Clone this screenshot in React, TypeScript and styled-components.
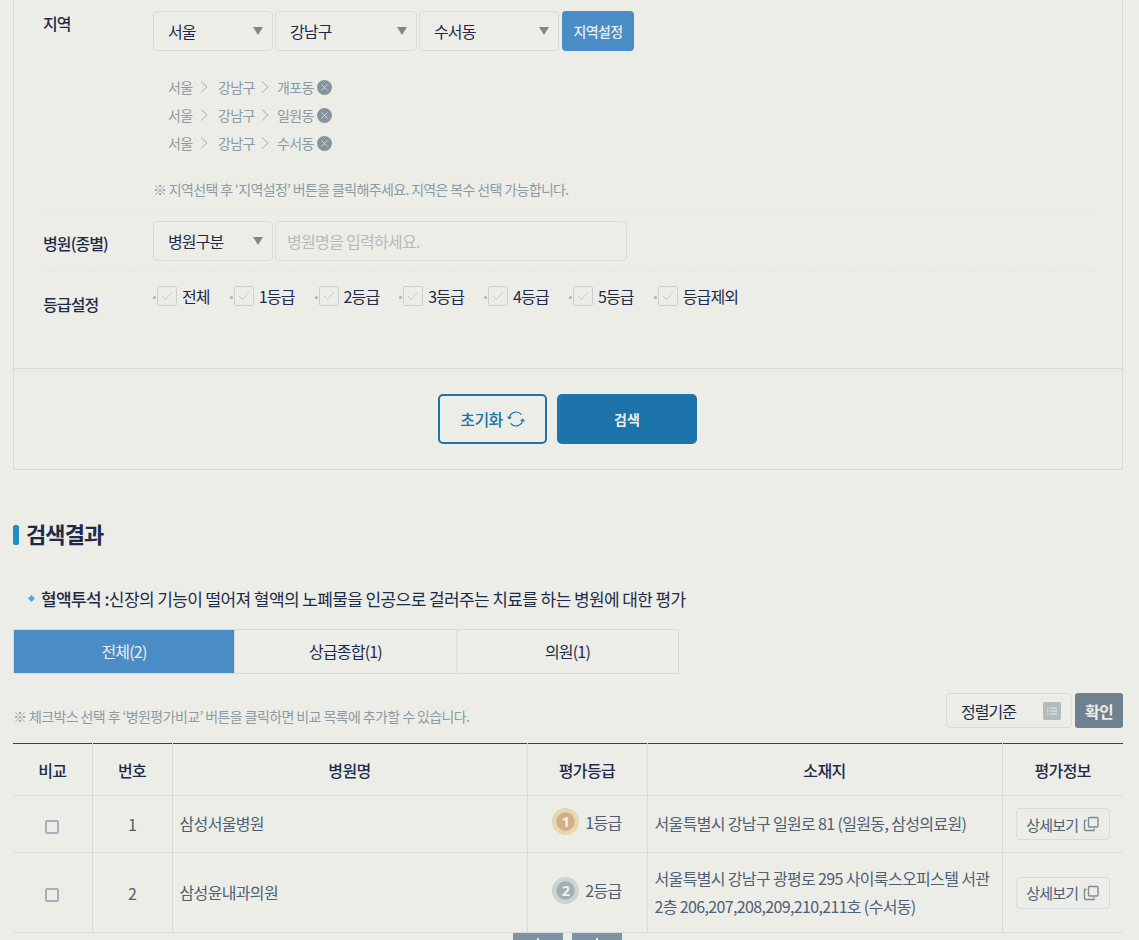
import { createGlobalStyle } from 'styled-components';
import styled from 'styled-components';
import { X } from 'lucide-react';

const colors = {
  bg: '#ecede7',
  line: '#d3dcdc',
  navy: '#1e2a4a',
  text: '#4f6075',
  gray: '#8d9aa3',
  blue: '#4a8dc6',
  deep: '#1c74aa',
  slate: '#6f808e',
};

const GlobalStyle = createGlobalStyle`
  html, body {
    margin: 0;
    height: 940px;
    overflow: hidden;
    background: ${colors.bg};
  }
  * {
    box-sizing: border-box;
  }
  body {
    font-family: 'Noto Sans CJK KR', 'Noto Sans', sans-serif;
    letter-spacing: -0.6px;
    color: ${colors.navy};
  }
`;

const regions = ['개포동', '일원동', '수서동'];
const grades = ['전체', '1등급', '2등급', '3등급', '4등급', '5등급', '등급제외'];

function Medal({ rank }: { rank: number }) {
  const outer = rank === 1 ? '#e6d5ab' : '#c8d2d1';
  const rays = rank === 1 ? '#e9dab4' : '#ced7d5';
  const inner = rank === 1 ? '#d2af85' : '#a3afb3';
  return (
    <svg width="27" height="27" viewBox="0 0 28 28">
      <circle cx="14" cy="14" r="14" fill={outer} />
      <circle cx="14" cy="14" r="11.5" fill="none" stroke={rays} strokeWidth="3" strokeDasharray="3 2" />
      <circle cx="14" cy="14" r="9.5" fill={inner} />
      <text
        x="14"
        y="19.5"
        textAnchor="middle"
        fontSize="15"
        fontWeight="700"
        fontFamily="'Noto Sans', sans-serif"
        fill="#f2f1ea"
      >
        {rank}
      </text>
    </svg>
  );
}

function Chevron() {
  return (
    <svg width="8" height="12" viewBox="0 0 8 12" fill="none" stroke="#a3aeb5" strokeWidth="1">
      <path d="M1 0.5L7 6L1 11.5" />
    </svg>
  );
}

function RefreshIcon() {
  return (
    <svg width="18" height="18" viewBox="0 0 20 20" fill="none" stroke={colors.deep} strokeWidth="1.3">
      <path d="M2.5 9A7.6 7.6 0 0 1 16 5.2" />
      <path d="M17.5 11A7.6 7.6 0 0 1 4 14.8" />
      <path d="M0.6 7.4L2.5 9.6L4.8 7.8" />
      <path d="M19.4 12.6L17.5 10.4L15.2 12.2" />
    </svg>
  );
}

function CopyIcon() {
  return (
    <svg width="16" height="16" viewBox="0 0 16 16" fill="none" stroke="#7d8b98" strokeWidth="1.4">
      <rect x="5.5" y="1.5" width="9.5" height="9.5" rx="1" />
      <path d="M3.5 4.5H1.5V13.5A1 1 0 0 0 2.5 14.5H11V12.5" />
    </svg>
  );
}

function ListIcon() {
  return (
    <svg width="10" height="8" viewBox="0 0 10 8" stroke="#ecede7" strokeWidth="1">
      <path d="M0 1H1.5M3 1H10M0 4H1.5M3 4H10M0 7H1.5M3 7H10" />
    </svg>
  );
}

export default function App() {
  return (
    <Page>
      <GlobalStyle />
      <Panel>
        <FormArea>
          <RegionRow>
            <RowLabel>지역</RowLabel>
            <RowBody>
              <Controls>
                <SelectBox $width={120}>서울</SelectBox>
                <SelectBox $width={142}>강남구</SelectBox>
                <SelectBox $width={140}>수서동</SelectBox>
                <RegionButton>지역설정</RegionButton>
              </Controls>
              <PathList>
                {regions.map(name => (
                  <PathRow key={name}>
                    <PathCity>서울</PathCity>
                    <Chevron />
                    <PathDistrict>강남구</PathDistrict>
                    <Chevron />
                    <PathDong>{name}</PathDong>
                    <RemoveBadge>
                      <X size={11} strokeWidth={1.6} />
                    </RemoveBadge>
                  </PathRow>
                ))}
              </PathList>
              <Hint>※ 지역선택 후 ‘지역설정’ 버튼을 클릭해주세요. 지역은 복수 선택 가능합니다.</Hint>
            </RowBody>
          </RegionRow>
          <HospitalRow>
            <HospitalLabel>병원(종별)</HospitalLabel>
            <Controls>
              <SelectBox $width={120}>병원구분</SelectBox>
              <NameInput placeholder="병원명을 입력하세요." />
            </Controls>
          </HospitalRow>
          <GradeRow>
            <GradeLabel>등급설정</GradeLabel>
            <GradeList>
              {grades.map(grade => (
                <GradeItem key={grade}>
                  <Dot />
                  <CheckBox>
                    <svg width="12" height="10" viewBox="0 0 12 10" fill="none" stroke="#c3cdcc" strokeWidth="1">
                      <path d="M1 5L4.5 8.5L11 1" />
                    </svg>
                  </CheckBox>
                  <span>{grade}</span>
                </GradeItem>
              ))}
            </GradeList>
          </GradeRow>
        </FormArea>
        <ActionBar>
          <ResetButton>
            초기화 <RefreshIcon />
          </ResetButton>
          <SearchButton>검색</SearchButton>
        </ActionBar>
      </Panel>

      <ResultTitle>검색결과</ResultTitle>
      <Description>
        <b>혈액투석 :</b>신장의 기능이 떨어져 혈액의 노폐물을 인공으로 걸러주는 치료를 하는 병원에 대한 평가
      </Description>

      <Tabs>
        <Tab $active>전체(2)</Tab>
        <Tab>상급종합(1)</Tab>
        <Tab>의원(1)</Tab>
      </Tabs>

      <TableTools>
        <ToolNote>※ 체크박스 선택 후 ‘병원평가비교’ 버튼을 클릭하면 비교 목록에 추가할 수 있습니다.</ToolNote>
        <SortBox>
          정렬기준
          <SortIcon>
            <ListIcon />
          </SortIcon>
        </SortBox>
        <ConfirmButton>확인</ConfirmButton>
      </TableTools>

      <Table>
        <colgroup>
          <col width="79" />
          <col width="80" />
          <col width="355" />
          <col width="120" />
          <col width="355" />
          <col width="121" />
        </colgroup>
        <thead>
          <tr>
            <HeadCell>비교</HeadCell>
            <HeadCell>번호</HeadCell>
            <HeadCell>병원명</HeadCell>
            <HeadCell>평가등급</HeadCell>
            <HeadCell>소재지</HeadCell>
            <HeadCell>평가정보</HeadCell>
          </tr>
        </thead>
        <tbody>
          <ShortRow>
            <CenterCell><RowCheck /></CenterCell>
            <CenterCell>1</CenterCell>
            <LeftCell>삼성서울병원</LeftCell>
            <CenterCell>
              <GradeMark><Medal rank={1} />1등급</GradeMark>
            </CenterCell>
            <LeftCell>서울특별시 강남구 일원로 81 (일원동, 삼성의료원)</LeftCell>
            <CenterCell>
              <DetailButton>상세보기 <CopyIcon /></DetailButton>
            </CenterCell>
          </ShortRow>
          <TallRow>
            <CenterCell><RowCheck /></CenterCell>
            <CenterCell>2</CenterCell>
            <LeftCell>삼성윤내과의원</LeftCell>
            <CenterCell>
              <GradeMark><Medal rank={2} />2등급</GradeMark>
            </CenterCell>
            <LeftCell>서울특별시 강남구 광평로 295 사이룩스오피스텔 서관 2층 206,207,208,209,210,211호 (수서동)</LeftCell>
            <CenterCell>
              <DetailButton>상세보기 <CopyIcon /></DetailButton>
            </CenterCell>
          </TallRow>
        </tbody>
      </Table>
      <PagerRow>
        <PagerButton />
        <PagerButton />
      </PagerRow>
    </Page>
  );
}

const Page = styled.div`
  width: 1110px;
  margin-left: 13px;
`;

const Panel = styled.section`
  border: 1px solid ${colors.line};
  border-top: none;
  height: 470px;
  display: flex;
  flex-direction: column;
`;

const FormArea = styled.div`
  height: 368px;
  padding: 0 26px 0 29px;
`;

const RegionRow = styled.div`
  display: flex;
  height: 212px;
  padding-top: 11px;
  border-bottom: 1px dashed #e1e6e2;
`;

const RowLabel = styled.div`
  width: 110px;
  font-size: 16px;
  font-weight: 500;
  line-height: 24px;
  letter-spacing: -0.9px;
`;

const RowBody = styled.div`
  flex: 1;
`;

const Controls = styled.div`
  display: flex;
  gap: 2px;
`;

const SelectBox = styled.div<{ $width: number }>`
  position: relative;
  width: ${({ $width }) => $width}px;
  height: 40px;
  padding-left: 14px;
  border: 1px solid ${colors.line};
  border-radius: 4px;
  font-size: 16px;
  line-height: 38px;
  letter-spacing: -0.9px;

  &::after {
    content: '';
    position: absolute;
    right: 9px;
    top: 15px;
    border-left: 5px solid transparent;
    border-right: 5px solid transparent;
    border-top: 8px solid #7c8992;
  }
`;

const RegionButton = styled.button`
  width: 72px;
  height: 40px;
  margin-left: 1px;
  border: none;
  border-radius: 4px;
  background: ${colors.blue};
  color: #ecede7;
  font: inherit;
  font-size: 14px;
  font-weight: 500;
  letter-spacing: -0.6px;
`;

const PathList = styled.div`
  margin-top: 22px;
  padding-left: 15px;
`;

const PathRow = styled.div`
  display: flex;
  align-items: center;
  height: 28px;
  font-size: 14px;
  color: ${colors.gray};

  svg {
    flex: none;
  }
`;

const PathCity = styled.span`
  width: 32px;
`;

const PathDistrict = styled.span`
  width: 43px;
  margin-left: 10px;
`;

const PathDong = styled.span`
  width: 39px;
  margin-left: 8px;
`;

const RemoveBadge = styled.span`
  display: flex;
  align-items: center;
  justify-content: center;
  width: 15px;
  height: 15px;
  margin-left: 1px;
  border-radius: 50%;
  background: #87949e;
  color: #ecede7;
`;

const Hint = styled.p`
  margin: 22px 0 0;
  font-size: 14px;
  line-height: 20px;
  letter-spacing: -0.65px;
  color: ${colors.gray};
`;

const HospitalRow = styled.div`
  display: flex;
  height: 59px;
  padding-top: 9px;
  border-bottom: 1px dashed #e1e6e2;
`;

const HospitalLabel = styled(RowLabel)`
  line-height: 44px;
`;

const NameInput = styled.input`
  width: 352px;
  height: 40px;
  padding: 0 11px;
  border: 1px solid ${colors.line};
  border-radius: 4px;
  background: transparent;
  font: inherit;
  font-size: 16px;
  letter-spacing: -0.7px;

  &::placeholder {
    color: #b3bcbc;
    opacity: 1;
  }
`;

const GradeRow = styled.div`
  display: flex;
  padding-top: 14px;
`;

const GradeLabel = styled(RowLabel)`
  line-height: 38px;
`;

const GradeList = styled.div`
  display: flex;
  gap: 20px;
  font-size: 16px;
  line-height: 22px;
  letter-spacing: -0.85px;
`;

const GradeItem = styled.label`
  display: flex;
  align-items: center;
  height: 22px;
`;

const Dot = styled.i`
  width: 3px;
  height: 3px;
  margin: 2px 1px 0 0;
  border-radius: 50%;
  background: #a9b4b6;
`;

const CheckBox = styled.span`
  display: flex;
  align-items: center;
  justify-content: center;
  width: 20px;
  height: 20px;
  margin-right: 5px;
  border: 1px solid #c9d2d2;
  border-radius: 2px;
`;

const ActionBar = styled.div`
  display: flex;
  justify-content: center;
  gap: 10px;
  flex: 1;
  padding: 25px 1px 0 0;
  border-top: 1px solid ${colors.line};
`;

const ResetButton = styled.button`
  display: flex;
  align-items: center;
  justify-content: center;
  gap: 4px;
  width: 109px;
  height: 50px;
  border: 2px solid ${colors.deep};
  border-radius: 5px;
  background: transparent;
  color: ${colors.deep};
  font: inherit;
  font-size: 16px;
  font-weight: 500;
  letter-spacing: -0.6px;
`;

const SearchButton = styled.button`
  width: 140px;
  height: 50px;
  border: none;
  border-radius: 5px;
  background: ${colors.deep};
  color: #ecede7;
  font: inherit;
  font-size: 14px;
  font-weight: 700;
`;

const ResultTitle = styled.h2`
  display: flex;
  align-items: center;
  gap: 7px;
  margin: 46px 0 0;
  height: 34px;
  font-size: 22px;
  font-weight: 700;
  letter-spacing: -0.9px;

  &::before {
    content: '';
    width: 6px;
    height: 20px;
    margin-top: 4px;
    border-radius: 2px;
    background: #1c8fc4;
  }
`;

const Description = styled.p`
  position: relative;
  margin: 34px 0 0;
  padding-left: 28px;
  height: 30px;
  font-size: 17px;
  line-height: 30px;

  &::before {
    content: '';
    position: absolute;
    left: 16px;
    top: 12px;
    width: 5px;
    height: 5px;
    transform: rotate(45deg);
    background: #5aa6d6;
  }

  b {
    font-weight: 500;
  }
`;

const Tabs = styled.div`
  display: flex;
  width: 666px;
  height: 45px;
  margin-top: 15px;
  border: 1px solid ${colors.line};
`;

const Tab = styled.div<{ $active?: boolean }>`
  flex: 1;
  border-right: 1px solid ${colors.line};
  background: ${({ $active }) => ($active ? colors.blue : 'transparent')};
  color: ${({ $active }) => ($active ? '#ecede7' : colors.navy)};
  font-size: 16px;
  line-height: 43px;
  letter-spacing: -0.8px;
  text-align: center;

  &:first-child {
    flex: none;
    width: 221px;
  }

  &:last-child {
    border-right: none;
  }
`;

const TableTools = styled.div`
  display: flex;
  align-items: flex-start;
  height: 50px;
  margin-top: 19px;
`;

const ToolNote = styled.p`
  flex: 1;
  margin: 13px 0 0;
  font-size: 14px;
  line-height: 20px;
  color: ${colors.gray};
`;

const SortBox = styled.div`
  display: flex;
  align-items: center;
  justify-content: space-between;
  width: 126px;
  height: 35px;
  padding: 0 10px 0 14px;
  border: 1px solid ${colors.line};
  border-radius: 4px;
  font-size: 16px;
  letter-spacing: -1px;
`;

const SortIcon = styled.span`
  display: flex;
  align-items: center;
  justify-content: center;
  width: 18px;
  height: 18px;
  border-radius: 2px;
  background: #b3bcbc;
`;

const ConfirmButton = styled.button`
  width: 48px;
  height: 35px;
  margin-left: 3px;
  border: none;
  border-radius: 3px;
  background: ${colors.slate};
  color: #ecede7;
  font: inherit;
  font-size: 16px;
  font-weight: 700;
  letter-spacing: -0.6px;
`;

const Table = styled.table`
  width: 1110px;
  table-layout: fixed;
  border-collapse: collapse;
  border-top: 1px solid #2f3f5f;
`;

const HeadCell = styled.th`
  height: 52px;
  padding: 0;
  border-bottom: 1px solid ${colors.line};
  border-left: 1px solid ${colors.line};
  font-size: 16px;
  font-weight: 500;

  &:first-child {
    border-left: none;
  }
`;

const CenterCell = styled.td`
  padding: 0;
  border-bottom: 1px solid ${colors.line};
  border-left: 1px solid ${colors.line};
  color: ${colors.text};
  font-size: 16px;
  letter-spacing: -0.65px;
  text-align: center;

  &:first-child {
    border-left: none;
  }
`;

const LeftCell = styled(CenterCell)`
  padding: 0 8px 2px 7px;
  line-height: 28px;
  text-align: left;
`;

const ShortRow = styled.tr`
  height: 57px;
`;

const TallRow = styled.tr`
  height: 80px;
`;

const RowCheck = styled.span`
  display: inline-block;
  width: 14px;
  height: 14px;
  border: 2px solid #a6afbb;
  border-radius: 2px;
  vertical-align: middle;
`;

const GradeMark = styled.span`
  display: inline-flex;
  align-items: center;
  gap: 6px;
`;

const DetailButton = styled.button`
  display: inline-flex;
  align-items: center;
  justify-content: center;
  gap: 5px;
  width: 94px;
  height: 32px;
  padding: 0;
  border: 1px solid ${colors.line};
  border-radius: 4px;
  background: transparent;
  color: ${colors.text};
  font: inherit;
  font-size: 15px;
  letter-spacing: -0.75px;
`;

const PagerRow = styled.div`
  display: flex;
  justify-content: center;
  gap: 9px;
  width: 1110px;
  padding-right: 2px;
`;

const PagerButton = styled.div`
  position: relative;
  width: 50px;
  height: 30px;
  background: #7f93a3;

  &::before {
    content: '';
    position: absolute;
    left: 24px;
    top: 5px;
    width: 2px;
    height: 4px;
    background: #ecede7;
  }
`;
